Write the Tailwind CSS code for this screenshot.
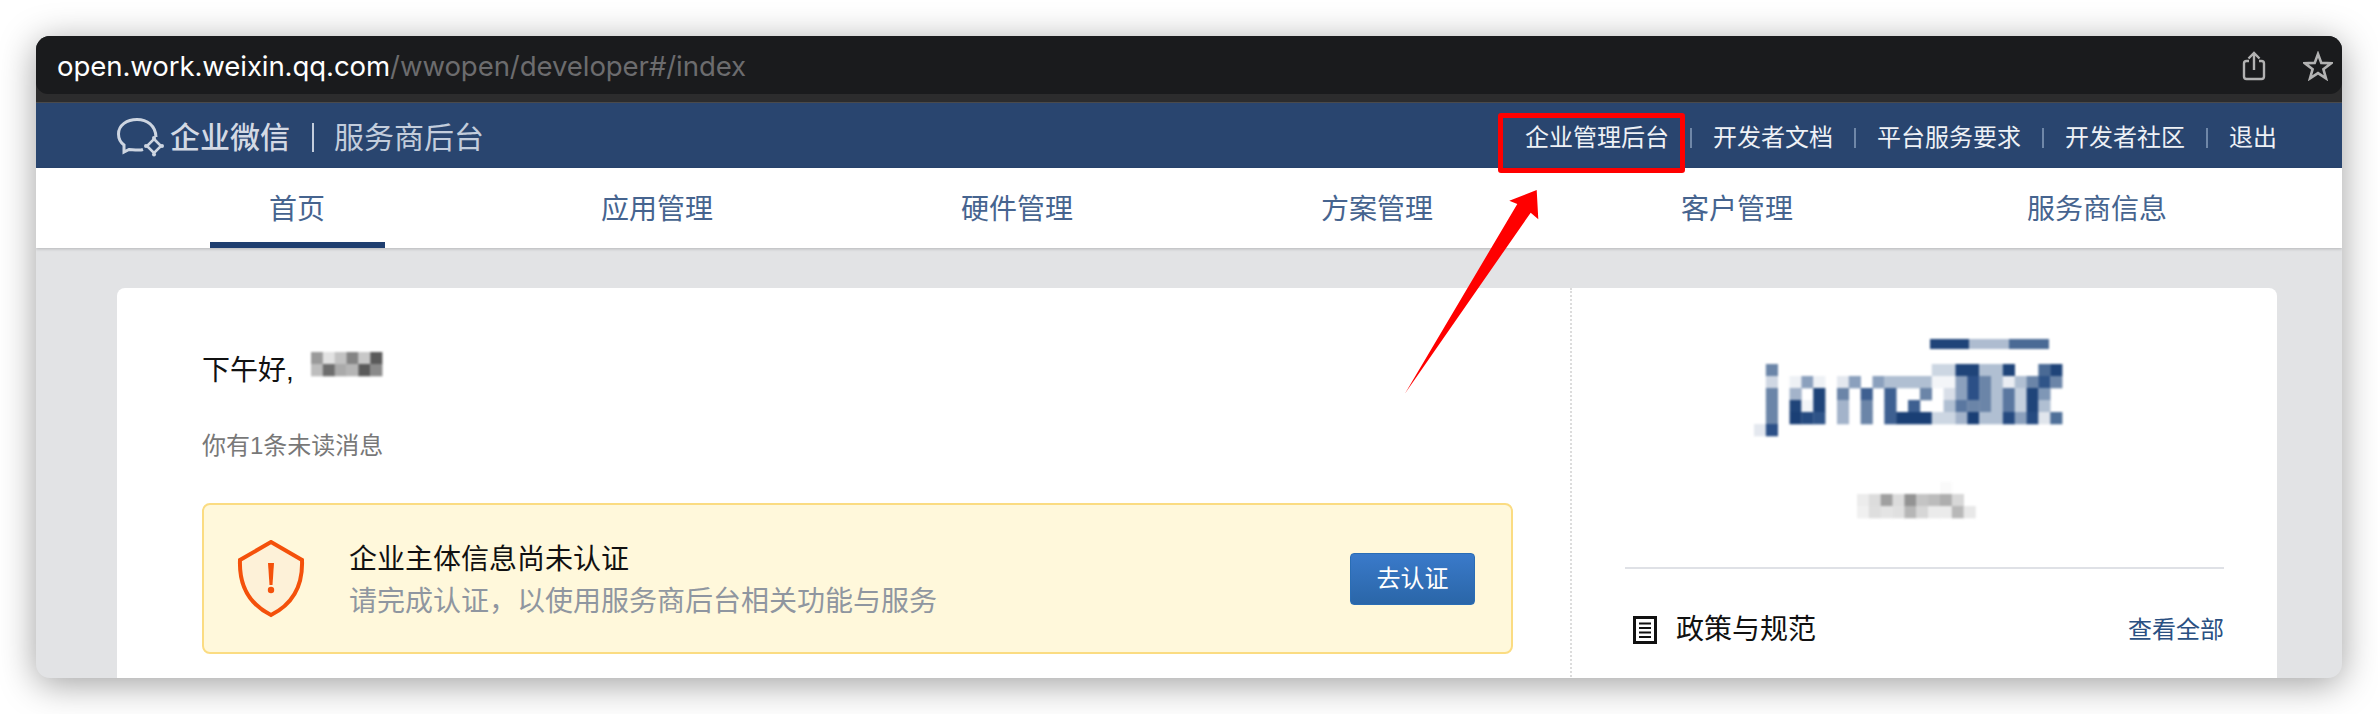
<!DOCTYPE html>
<html lang="en">
  <head>
    <meta charset="UTF-8" />
    <script src="https://cdn.jsdelivr.net/npm/@tailwindcss/browser@4"></script>
  </head>
  <body class="bg-white w-[2378px] h-[714px] overflow-hidden pt-[36px] pl-[36px] font-['Liberation_Sans','Noto_Sans_CJK_SC',sans-serif]">
    <div class="relative flex flex-col w-[2306px] h-[642px] rounded-[14px] overflow-hidden bg-[#e2e3e5] shadow-[0_6px_36px_rgba(0,0,0,0.38)]">

      <!-- browser bar -->
      <div class="bg-[#2c2c2d] border-b border-[#4a4a4b] h-[67px] shrink-0">
        <div class="flex items-center h-[58px] pl-[21px] pr-[9px] pt-[1px] bg-[#1a1b1d] rounded-b-[12px]">
          <div class="font-['Inter',sans-serif] text-[27.6px] leading-[40px] text-white tracking-[-0.1px]">open.work.weixin.qq.com<span class="text-[#6c6c6e]">/wwopen/developer#/index</span></div>
          <svg class="ml-auto mr-[37px]" width="24" height="30" viewBox="0 0 24 30" fill="none" stroke="#b2b2b2" stroke-width="2.4">
            <path d="M7 10H4.5C3 10 2 11 2 12.5V25.5C2 27 3 28 4.5 28H19.5C21 28 22 27 22 25.5V12.5C22 11 21 10 19.5 10H17" />
            <path d="M12 19V2M6.5 7.5L12 2L17.5 7.5" />
          </svg>
          <svg width="30" height="30" viewBox="0 0 30 30" fill="none" stroke="#b2b2b2" stroke-width="2.6" stroke-linejoin="miter">
            <path d="M15 3L18.3 11.9L28 12.3L20.4 18.2L23 27.4L15 22.1L7 27.4L9.6 18.2L2 12.3L11.7 11.9Z" />
          </svg>
        </div>
      </div>

      <!-- top header -->
      <div class="flex items-center h-[65px] shrink-0 pl-[81px] pr-[65px] pt-[4px] bg-[#29456f]">
        <svg class="mr-[5px]" width="48" height="40" viewBox="0 0 48 40" fill="none" stroke="#cdd5e1" stroke-width="3">
          <path d="M26 31.5C22 33 15 31.5 12 31.5L7 34V27C3 24 1.5 20 1.5 16C1.5 7 10 1.5 20 1.5C30 1.5 38.5 7.5 39 19" />
          <path d="M37 21L44 28L37 35L30 28Z" stroke-width="2.6" />
          <circle cx="37" cy="20" r="2" fill="#cdd5e1" stroke="none" />
          <circle cx="45" cy="28" r="2" fill="#cdd5e1" stroke="none" />
          <circle cx="37" cy="36.5" r="2" fill="#cdd5e1" stroke="none" />
          <circle cx="29" cy="28" r="2" fill="#cdd5e1" stroke="none" />
        </svg>
        <span class="text-[30px] leading-[40px] font-medium text-[#d3d9e4]">企业微信</span>
        <span class="w-[2px] h-[29px] ml-[22px] mr-[20px] bg-[#c3cddc]"></span>
        <span class="text-[30px] leading-[40px] text-[#c3cddc]">服务商后台</span>
        <div class="ml-auto flex items-center text-[24px] leading-[32px] text-[#eef1f6]">
          <a>企业管理后台</a>
          <span class="w-[2px] h-[20px] mx-[21px] bg-[#6f87a8]"></span>
          <a>开发者文档</a>
          <span class="w-[2px] h-[20px] mx-[21px] bg-[#6f87a8]"></span>
          <a>平台服务要求</a>
          <span class="w-[2px] h-[20px] mx-[21px] bg-[#6f87a8]"></span>
          <a>开发者社区</a>
          <span class="w-[2px] h-[20px] mx-[21px] bg-[#6f87a8]"></span>
          <a>退出</a>
        </div>
      </div>

      <!-- tabs -->
      <div class="h-[80px] shrink-0 pl-[81px] pr-[65px] bg-white shadow-[0_1px_3px_rgba(0,0,0,0.2)] z-10">
        <div class="grid grid-cols-6 h-full text-[28px] leading-[40px] text-[#46648f]">
          <div class="flex justify-center"><a class="flex justify-center w-[175px] h-full pt-[22px] border-b-[6px] border-[#1f3f70]">首页</a></div>
          <div class="flex justify-center pt-[22px]">应用管理</div>
          <div class="flex justify-center pt-[22px]">硬件管理</div>
          <div class="flex justify-center pt-[22px]">方案管理</div>
          <div class="flex justify-center pt-[22px]">客户管理</div>
          <div class="flex justify-center pt-[22px]">服务商信息</div>
        </div>
      </div>

      <!-- page body -->
      <div class="flex-1 min-h-0 overflow-hidden pl-[81px] pr-[65px] pt-[40px]">
        <div class="flex h-[420px] rounded-t-[8px] bg-white">
          <div class="w-[1455px] shrink-0 pl-[85px] pr-[57px] pt-[63px] border-r-2 border-dotted border-[#dcdcdc]">
            <div class="flex items-start h-[40px] text-[28px] leading-[40px] text-[#111]">
              <span>下午好,</span>
              <svg id="greet-blur" class="ml-[11px] -mt-[1px] blur-[1px]" width="84" height="30"></svg>
            </div>
            <p class="mt-[39px] text-[24px] leading-[32px] text-[#787878]">你有1条未读消息</p>
            <div class="flex items-center h-[151px] mt-[41px] pl-[33px] pr-[36px] bg-[#fff8db] border-2 border-[#fbdc82] rounded-[8px]">
              <svg width="68" height="78" viewBox="0 0 68 78" fill="#fdf1d8" stroke="#f4510b" stroke-width="4">
                <path d="M34 2L65 20C66 45 56 64 34 75C12 64 2 45 3 20Z" />
                <path d="M31 23H37L35.5 45H32.5Z" fill="#f4510b" stroke="none" />
                <circle cx="34" cy="50" r="3.2" fill="#f4510b" stroke="none" />
              </svg>
              <div class="ml-[44px] pt-[4px]">
                <div class="text-[28px] leading-[40px] text-[#111]">企业主体信息尚未认证</div>
                <div class="mt-[2px] text-[28px] leading-[40px] text-[#8f96a0]">请完成认证，以使用服务商后台相关功能与服务</div>
              </div>
              <button class="ml-auto flex items-center justify-center w-[125px] h-[52px] rounded-[4px] border border-[#2a6db5] bg-gradient-to-b from-[#3a7aca] to-[#2a66a8] text-[24px] text-white">去认证</button>
            </div>
          </div>

          <div class="flex-1 px-[53px] pt-[51px]">
            <svg id="logo-blur" class="block ml-[129px] blur-[1px]" width="320" height="100"></svg>
            <svg id="name-blur" class="block mt-[43px] ml-[232px] blur-[1px]" width="130" height="40"></svg>
            <div class="h-[2px] mt-[45px] bg-[#dfe1e6]"></div>
            <div class="flex items-center mt-[41px] h-[40px]">
              <svg class="ml-[8px]" width="24" height="28" viewBox="0 0 24 28" fill="none" stroke="#111" stroke-width="3">
                <rect x="1.5" y="1.5" width="21" height="25" />
                <path d="M6 7.5H18M6 12H18M6 16.5H18M6 21H18" stroke-width="2" />
              </svg>
              <span class="ml-[19px] text-[28px] leading-[40px] text-[#111]">政策与规范</span>
              <a class="ml-auto text-[24px] leading-[32px] text-[#2a5082]">查看全部</a>
            </div>
          </div>
        </div>
      </div>

      <!-- annotations -->
      <div class="absolute z-20 left-[1462px] top-[77px] w-[187px] h-[60px] border-[5px] border-[#ff0000] rounded-[3px]"></div>
      <svg class="absolute z-20 left-[1360px] top-[144px]" width="150" height="220" viewBox="1396 180 150 220">
        <polygon fill="#ff0000" points="1405,393.5 1517.3,204 1509.3,200.7 1536.7,190 1538.3,219.3 1530.7,212.7" />
      </svg>
    </div>

    <script>
      // pixelated placeholders, [col, row, colour] on a 12px grid
      const drawCells = (id, cells, offsetX = 0, offsetY = 0) => {
        const svg = document.getElementById(id)
        cells.forEach(([c, r, fill, w = 1]) => {
          const rect = document.createElementNS('http://www.w3.org/2000/svg', 'rect')
          rect.setAttribute('x', offsetX + c * 11.85)
          rect.setAttribute('y', offsetY + r * 12)
          rect.setAttribute('width', w * 11.85 + 0.3)
          rect.setAttribute('height', 12.3)
          rect.setAttribute('fill', fill)
          svg.appendChild(rect)
        })
      }

      const row = (r, list) => list.map(([c, fill, w]) => [c, r, fill, w])

      drawCells('greet-blur', [
        ...row(0, [[0, '#9a9a9a'], [1, '#e2e2e2'], [2, '#c2c2c2'], [3, '#848484'], [4, '#c8c8c8'], [5, '#5a5a5a']]),
        ...row(1, [[0, '#bdbdbd'], [1, '#6e6e6e'], [2, '#aaaaaa'], [3, '#b5b5b5'], [4, '#5a5a5a'], [5, '#8a8a8a']]),
      ], 6, 2)

      drawCells('name-blur', [
        ...row(0, [[7, '#fafafa']]),
        ...row(1, [[0, '#ececec'], [1, '#dcdcdc'], [2, '#a0a0a0'], [3, '#dcdcdc'], [4, '#939393'], [5, '#c4c4c4'], [6, '#bcbcbc'], [7, '#aeaeae'], [8, '#d8d8d8']]),
        ...row(2, [[0, '#f0f0f0'], [1, '#dedede'], [2, '#e4e4e4'], [3, '#e0e0e0'], [4, '#b6b6b6'], [5, '#d6d6d6'], [6, '#ebebeb'], [7, '#ebebeb'], [8, '#b8b8b8'], [9, '#e8e8e8']]),
      ])

      const logoBar = document.getElementById('logo-blur')
      ;[[176, '#1f4479'], [215, '#aebcd0'], [255, '#4a6a95']].forEach(([x, fill]) => {
        const rect = document.createElementNS('http://www.w3.org/2000/svg', 'rect')
        rect.setAttribute('x', x)
        rect.setAttribute('y', 0)
        rect.setAttribute('width', 40)
        rect.setAttribute('height', 10)
        rect.setAttribute('fill', fill)
        logoBar.appendChild(rect)
      })

      drawCells('logo-blur', [
        ...row(0, [[1, '#6b85a8'], [15, '#ccd6e2', 2], [17, '#1f4479', 2], [19, '#b0bfd2', 2], [21, '#1f4479'], [24, '#4a6a95'], [25, '#1f4479']]),
        ...row(1, [[1, '#cfd7e3'], [3, '#eef1f5'], [4, '#8ba0bd'], [5, '#eef1f5'], [7, '#e4e8ef'], [8, '#8ba0bd'], [10, '#8ba0bd'], [11, '#b0bfd2', 4], [15, '#f3f5f8', 2], [17, '#8ba0bd'], [18, '#2c5087'], [19, '#6b85a8'], [20, '#b0bfd2'], [21, '#eaedf3'], [22, '#b0bfd2'], [23, '#6b85a8'], [24, '#2f5488'], [25, '#6b85a8']]),
        ...row(2, [[1, '#6b85a8'], [3, '#a3b3ca'], [5, '#1f4479'], [7, '#6b85a8'], [9, '#3e6091'], [11, '#3e6091'], [14, '#6b85a8'], [16, '#d8dee8'], [17, '#8ba0bd'], [18, '#2c5087'], [19, '#6b85a8'], [20, '#b0bfd2'], [21, '#5a77a0'], [22, '#c5d0de'], [23, '#1f4479'], [24, '#7f97b6']]),
        ...row(3, [[1, '#6b85a8'], [3, '#1f4479'], [4, '#f2f5f8'], [5, '#1f4479'], [7, '#a3b3ca'], [9, '#6b85a8'], [11, '#3e6091'], [13, '#3e6091'], [16, '#b0bfd2'], [17, '#5a77a0'], [18, '#6b85a8'], [19, '#6b85a8'], [20, '#b0bfd2'], [21, '#5a77a0'], [22, '#c5d0de'], [23, '#1f4479'], [24, '#b0bfd2']]),
        ...row(4, [[1, '#6b85a8'], [3, '#1a3f75'], [4, '#254a80'], [5, '#2f5488'], [7, '#a3b3ca'], [9, '#6b85a8'], [11, '#3e6091'], [12, '#1a3f75', 3], [15, '#ccd6e2', 2], [17, '#a3b3ca'], [18, '#1a3f75'], [19, '#b0bfd2', 2], [21, '#254a80'], [22, '#8ba0bd'], [23, '#254a80'], [24, '#e0e5ec'], [25, '#4f7099']]),
        ...row(5, [[0, '#e4e8ef'], [1, '#2c5087']]),
      ], 0, 25)
    </script>
  </body>
</html>
